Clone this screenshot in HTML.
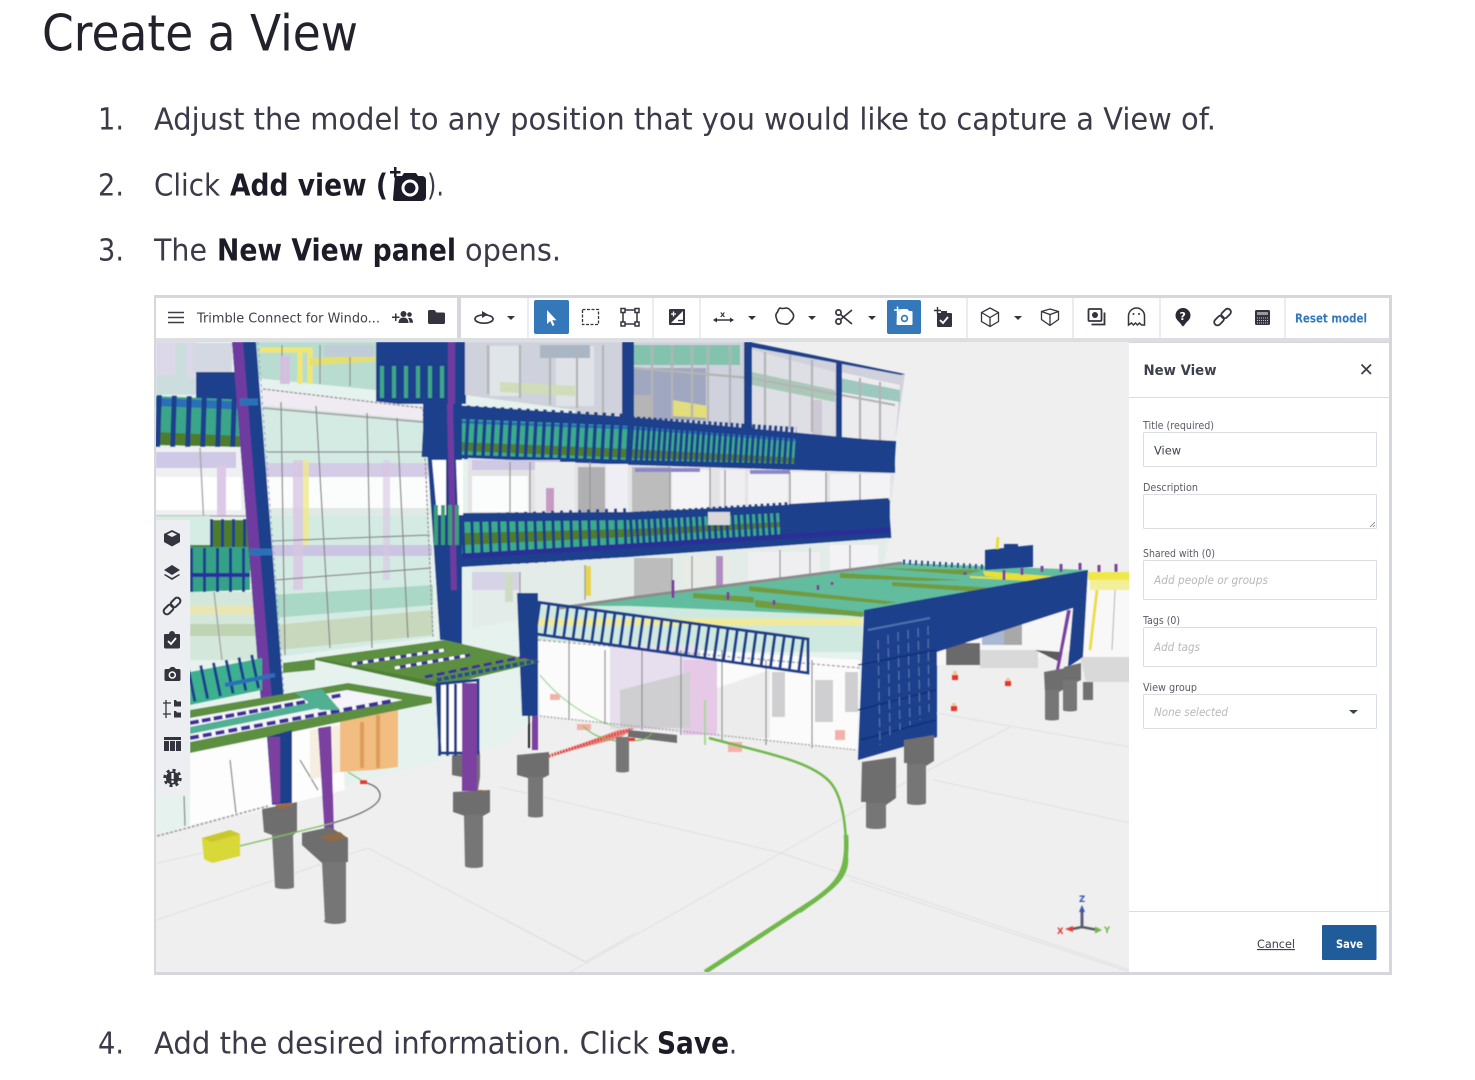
<!DOCTYPE html>
<html lang="en">
<head>
<meta charset="utf-8">
<title>Create a View</title>
<style>
html,body{margin:0;padding:0;background:#fff;width:1475px;height:1080px;overflow:hidden}
svg{display:block}
text{font-family:"DejaVu Sans","Liberation Sans",sans-serif}
.b{fill:#3a3a48;font-size:30.500px}
.s{fill:#1c1c28;font-size:30px;font-weight:bold}
.l{fill:#5a5c66;font-size:10.500px}
.p{fill:#b8b8bc;font-size:11.500px;font-style:italic}
</style>
</head>
<body>
<svg width="1475" height="1080" viewBox="0 0 1475 1080" xmlns="http://www.w3.org/2000/svg">
<defs>
<clipPath id="v"><rect x="156" y="342" width="973" height="630"/></clipPath>
<filter id="bl" x="0" y="0" width="1" height="1"><feGaussianBlur stdDeviation="0.4"/></filter>
</defs>
<rect width="1475" height="1080" fill="#fff"/>

<!-- headings and steps -->
<text x="42" y="50.500" font-size="50" fill="#22222c" textLength="316" lengthAdjust="spacingAndGlyphs">Create a View</text>
<text class="b" x="98" y="129.500" textLength="26" lengthAdjust="spacingAndGlyphs">1.</text>
<text class="b" x="154" y="129.500" textLength="1062" lengthAdjust="spacingAndGlyphs">Adjust the model to any position that you would like to capture a View of.</text>
<text class="b" x="98" y="195.500" textLength="26" lengthAdjust="spacingAndGlyphs">2.</text>
<text class="b" x="154" y="195.500" textLength="66" lengthAdjust="spacingAndGlyphs">Click</text>
<text class="s" x="230" y="195.500" textLength="158" lengthAdjust="spacingAndGlyphs">Add view (</text>
<g fill="#1c1c28">
<path d="M395 176h7l2-3h12l2 3h4a4 4 0 0 1 4 4v17a4 4 0 0 1-4 4h-27a2 2 0 0 1-2-2z"/>
<path d="M394 167h2.500v4h4v2.500h-4v4h-2.500v-4h-4v-2.500h4z"/>
</g>
<circle cx="410" cy="188" r="7" fill="none" stroke="#fff" stroke-width="3"/>
<text class="b" x="427" y="195.500" textLength="17" lengthAdjust="spacingAndGlyphs">).</text>
<text class="b" x="98" y="260.500" textLength="26" lengthAdjust="spacingAndGlyphs">3.</text>
<text class="b" x="154" y="260.500" textLength="53" lengthAdjust="spacingAndGlyphs">The</text>
<text class="s" x="217" y="260.500" textLength="239" lengthAdjust="spacingAndGlyphs">New View panel</text>
<text class="b" x="465" y="260.500" textLength="96" lengthAdjust="spacingAndGlyphs">opens.</text>
<text class="b" x="98" y="1053.500" textLength="26" lengthAdjust="spacingAndGlyphs">4.</text>
<text class="b" x="154" y="1053.500" textLength="495" lengthAdjust="spacingAndGlyphs">Add the desired information. Click</text>
<text class="s" x="657" y="1053.500" textLength="72" lengthAdjust="spacingAndGlyphs">Save</text>
<text class="b" x="729" y="1053.500" textLength="8" lengthAdjust="spacingAndGlyphs">.</text>

<!-- frame -->
<rect x="154" y="295" width="1238" height="680" fill="#d5d7dd"/>
<rect x="156" y="342" width="973" height="630" fill="#efefef"/>

<!-- 3D scene -->
<g clip-path="url(#v)"><g filter="url(#bl)">
<!-- floor lines -->
<g stroke="#e0e0e0" stroke-width="1" fill="none">
<path d="M157 920L368 848L585 962L635 933M157 863L272 838M500 787L781 853L1130 970M781 853L570 972M781 853L910 780M850 880L1130 972M500 917L588 963M934 780L1130 823M936 713L1130 747M1010 727L910 780"/>
</g>
<!-- building base -->
<path d="M156 342H750L905 374L895 442L890 538L878 600L864 612L857 750L540 715L500 745L157 835Z" fill="#e6f2ee"/>
<!-- left upper glass -->
<rect x="156" y="342" width="40" height="52" fill="#dcd8ea"/>
<path d="M175 343h12v35h8v17h-39v-20h19z" fill="#c5dfd8" opacity=".7"/>
<rect x="192" y="343" width="40" height="30" fill="#d4d8e2"/>
<path d="M196 372H240V404H196Z" fill="#1f3f8c"/>
<path d="M156 396L250 400V447L156 445Z" fill="#3aa58a"/>
<path d="M156 398L250 402V410L156 406Z" fill="#2b70b8"/>
<path d="M156 432L240 436V447L156 445Z" fill="#4d7d2a"/>
<path d="M156 421L250 424" stroke="#1f3f8c" stroke-width="52" stroke-dasharray="5 10" fill="none"/>
<path d="M156 447H250V518L156 516Z" fill="#eef0f2"/>
<rect x="156" y="477" width="85" height="33" fill="#fff"/>
<rect x="156" y="452" width="80" height="16" fill="#cfc8e6"/>
<rect x="217" y="465" width="9" height="52" fill="#dcc9e6"/>
<path d="M156 516H247M200 448L205 545" stroke="#a9a9a9" stroke-width="1.500" fill="none"/>
<rect x="156" y="516" width="54" height="90" fill="#d5ece4"/>
<path d="M210 520H250V548H190V545H210Z" fill="#4e7d2c"/>
<path d="M210 533H250" stroke="#1f3f8c" stroke-width="28" stroke-dasharray="3 8" fill="none"/>
<path d="M190 547H250V590L190 592Z" fill="#35a287"/>
<path d="M190 570H250" stroke="#1f3f8c" stroke-width="44" stroke-dasharray="3 10" fill="none"/>
<path d="M190 575H250" stroke="#2b2f9e" stroke-width="4"/>
<path d="M190 592H254L258 660H190Z" fill="#d3e8db"/>
<path d="M190 610H256" stroke="#e9e6b4" stroke-width="9"/>
<path d="M190 630H256" stroke="#c0d4b4" stroke-width="12"/>
<path d="M214 592L222 660M254 590L258 660" stroke="#a9a9a9" stroke-width="1.500"/>
<!-- upper area between column and blue block -->
<path d="M256 342H376V390L256 378Z" fill="#b8ddd0"/>
<path d="M260 350H310V384M300 352V384" stroke="#f0e670" stroke-width="5" fill="none"/>
<path d="M310 362L375 358" stroke="#e4df70" stroke-width="7"/>
<path d="M282 345V384M320 345V384M350 345V386" stroke="#8f8f8f" stroke-width="1.200"/>
<rect x="280" y="356" width="10" height="28" fill="#d3c0de"/>
<rect x="324" y="345" width="50" height="12" fill="#c0ccd6"/>
<rect x="376" y="342" width="90" height="62" fill="#1f3f8c"/>
<path d="M380 382H448" stroke="#3fa688" stroke-width="32" stroke-dasharray="4 8" fill="none"/>
<rect x="448" y="342" width="7" height="62" fill="#6f3aa0"/>
<!-- big panel -->
<path d="M260 388L423 407L433 637L278 657Z" fill="#d4ebe3"/>
<path d="M260 388L423 407V420L262 405Z" fill="#f0eaf2"/>
<path d="M263 408L423 422" stroke="#aaa" stroke-width="2"/>
<path d="M266 463H428V477H266Z" fill="#d4cbe6"/>
<path d="M266 477H429V508H266Z" fill="#fbfcfc"/>
<path d="M268 508H430V516H268Z" fill="#dfe9e6"/>
<path d="M270 545H432V556H270Z" fill="#cbc4e2"/>
<path d="M272 595L433 585V605L272 618Z" fill="#a9d8c6"/>
<path d="M275 625L433 610V635L278 650Z" fill="#c8d8bc"/>
<rect x="293" y="460" width="10" height="130" fill="#d8c5e2" opacity=".8"/>
<rect x="303" y="460" width="6" height="85" fill="#efe88a" opacity=".8"/>
<rect x="383" y="460" width="7" height="120" fill="#d8c5e2" opacity=".6"/>
<g stroke="#8b8b8b" stroke-width="1.300" fill="none">
<path d="M281 402L285 655M316 406L330 648M367 413L372 648M397 418L408 638M267 452H425M272 541L430 535M275 580L431 568"/>
</g>
<path d="M263 389L423 408L433 637" stroke="#9c9c9c" stroke-width="1.500" fill="none" stroke-dasharray="3 1.500"/>
<!-- upper right glass -->
<path d="M465 342H750L905 374L895 442L630 417L575 410L465 395Z" fill="#cfd2dc"/>
<rect x="490" y="346" width="30" height="50" fill="#dfe5e8"/>
<rect x="556" y="346" width="38" height="60" fill="#dfe3e8"/>
<path d="M540 345H590V358H540Z" fill="#a9b6c4"/>
<path d="M500 382L575 386V396L500 392Z" fill="#d1ddb8"/>
<path d="M575 410H612V428H575Z" fill="#d4d4d6"/>
<rect x="634" y="368" width="72" height="52" fill="#9fa8c0"/>
<rect x="634" y="395" width="18" height="24" fill="#b5b5b5"/>
<path d="M632 345H740V365H632Z" fill="#83c3ae"/>
<path d="M672 400L708 406V418L672 416Z" fill="#e3dd7c"/>
<path d="M752 350L835 372V438L752 425Z" fill="#dedfe4"/>
<path d="M752 372L835 390V402L752 385Z" fill="#a8c9b8"/>
<path d="M840 372L900 385L895 442L840 437Z" fill="#ececee"/>
<path d="M840 378L900 390V402L840 392Z" fill="#9cc8c0"/>
<path d="M812 400H822V438H812Z" fill="#cdc7d6"/>
<g stroke="#b4b4b6" stroke-width="2.200" fill="none">
<path d="M488 345V394M520 345V398M550 345V405M577 345V408M603 345V426M652 345V418M672 345V420M692 345V420M708 345V423M730 345V425M765 352V428M790 355V430M812 360V432M860 378V440M880 382V441M634 368L750 378L895 405"/>
</g>
<rect x="622" y="342" width="12" height="280" fill="#1f3f8c"/>
<path d="M750 342L905 374L901 375L750 347Z" fill="#1f3f8c"/>
<rect x="744" y="342" width="8" height="300" fill="#1f3f8c"/>
<rect x="836" y="362" width="6" height="270" fill="#1f3f8c"/>
<!-- band 1 -->
<path d="M423 403L630 417L895 442V473L630 465L423 457Z" fill="#1f3f8c"/>
<path d="M435 418L630 426L895 448V466L630 460L435 454Z" fill="#3aab8c"/>
<path d="M435 441L630 449L895 463V466L630 458L435 450Z" fill="#4d7d2a"/>
<path d="M435 421L630 428L795 440" stroke="#2b70b8" stroke-width="3" fill="none"/>
<path d="M423 430L630 441" stroke="#1f3f8c" stroke-width="54" stroke-dasharray="3.500 5" fill="none"/>
<path d="M630 441L795 452" stroke="#1f3f8c" stroke-width="50" stroke-dasharray="3 2.500" fill="none"/>
<path d="M795 452L895 458" stroke="#1f3f8c" stroke-width="34" fill="none"/>
<path d="M470 411L580 420" stroke="#1f3f8c" stroke-width="8"/>
<!-- mid glass -->
<path d="M468 458L630 465L895 473L890 507L630 512L468 516Z" fill="#e3e3e6"/>
<path d="M472 460H560V470H472Z" fill="#cfc8e4"/>
<rect x="472" y="476" width="56" height="36" fill="#fbfcfc"/>
<rect x="578" y="467" width="27" height="46" fill="#b0b0b2"/>
<rect x="606" y="464" width="22" height="48" fill="#efeef4"/>
<path d="M535 462H575V515H535Z" fill="#ebecee"/>
<rect x="546" y="488" width="8" height="24" fill="#c79ac4"/>
<rect x="632" y="467" width="38" height="45" fill="#bcbcbc"/>
<rect x="672" y="470" width="38" height="40" fill="#f4f4f6"/>
<rect x="720" y="470" width="25" height="45" fill="#efeff2"/>
<rect x="748" y="472" width="40" height="36" fill="#f2f2f4"/>
<rect x="790" y="472" width="36" height="36" fill="#f4f4f6"/>
<rect x="830" y="474" width="60" height="33" fill="#f3f3f5"/>
<path d="M635 470H700M750 472H790" stroke="#8b86c8" stroke-width="4"/>
<g stroke="#969696" stroke-width="1.300">
<path d="M510 462V515M530 462V516M590 462V512M670 467V510M710 467V510M725 470V515M790 472V510M826 472V508M860 474V507"/>
</g>
<!-- band 2 -->
<path d="M462 513L630 512L890 500V538L630 557L462 567Z" fill="#1f3f8c"/>
<path d="M462 522L630 520L780 513V535L630 548L462 558Z" fill="#3aab8c"/>
<path d="M462 533L630 529L780 522V527L630 537L462 545Z" fill="#4d7d2a"/>
<path d="M462 540L630 534" stroke="#1f3f8c" stroke-width="52" stroke-dasharray="3 6" fill="none"/>
<path d="M630 534L790 524" stroke="#1f3f8c" stroke-width="44" stroke-dasharray="3 3" fill="none"/>
<path d="M790 524L890 518" stroke="#1f3f8c" stroke-width="40" fill="none"/>
<path d="M462 556L630 546L890 530" stroke="#2a2f96" stroke-width="5" fill="none"/>
<path d="M708 512H730V525H708Z" fill="#d8d8da"/>
<!-- below band 2 glass -->
<path d="M472 567L630 557L888 538L878 600L630 600L472 628Z" fill="#e3ece8"/>
<path d="M472 572H520V590H472Z" fill="#d6d3e6"/>
<rect x="505" y="572" width="8" height="30" fill="#cfdcc4"/>
<path d="M634 558H672V596H634Z" fill="#bcbcbc"/>
<path d="M682 557H730V592H682Z" fill="#e8ebe6"/>
<rect x="716" y="556" width="7" height="36" fill="#b08dc0"/>
<path d="M748 552H820V588H748Z" fill="#efeff2"/>
<path d="M830 545H878V588H830Z" fill="#f3f3f5"/>
<rect x="585" y="566" width="6" height="30" fill="#e8d54a"/>
<g stroke="#9c9c9c" stroke-width="1.300"><path d="M520 572V596M585 565V600M672 558V595M692 556V592M780 550V590M810 548V586M850 545V585"/></g>
<!-- mint strip behind fence -->
<path d="M538 606H862V652H538Z" fill="#cfe9e0"/>
<path d="M538 622H862" stroke="#f0ea9a" stroke-width="7"/>
<!-- deck -->
<path d="M560 606L630 598L902 563L1088 570L863 616L630 606Z" fill="#62bd9e"/>
<path d="M560 608L630 598L902 563" stroke="#8c8c8c" stroke-width="3" fill="none"/>
<g fill="#6f9c3c">
<path d="M693 593L754 597V603L693 598Z"/>
<path d="M755 600L863 612V617L755 607Z"/>
<path d="M749 586L897 602L885 604L749 591Z"/>
<path d="M840 573L963 580L925 581L840 578Z"/>
<path d="M892 582L997 588L980 592L892 586Z"/>
<path d="M877 568L983 570L965 575Z"/>
</g>
<path d="M983 571L1062 577L1040 582L985 576Z" fill="#e8e033"/>
<path d="M970 577L1030 580" stroke="#e8e033" stroke-width="2"/>
<path d="M903 562L983 567" stroke="#29478f" stroke-width="5" stroke-dasharray="2 4" fill="none"/>
<g stroke="#7c3fa0" stroke-width="3"><path d="M965 575V572M1004 580V570M1022 568V575M1042 566V572M1061 564V572M1080 563V570M1099 565V573M1116 564V572"/><path d="M774 600V605M673 598V580M818 590V585M728 600V592M832 585V582"/></g>
<path d="M985 550L1033 545V567L985 570Z" fill="#1f3f8c"/>
<path d="M1004 549H1018V544H1004Z" fill="#1f3f8c"/>
<rect x="996" y="537" width="3" height="12" fill="#e8e033" transform="rotate(4 997 543)"/>
<!-- ground floor interior -->
<path d="M538 640L860 660L857 750L540 716Z" fill="#fbfbfb"/>
<path d="M610 645H700V730H610Z" fill="#e8dfee"/>
<path d="M683 660H717V735H683Z" fill="#e6c9e6"/>
<path d="M620 690L690 672V728H620Z" fill="#cfcfd2"/>
<path d="M717 688L770 670V738H717Z" fill="#ececec"/>
<path d="M772 672H785V717H772ZM815 680H833V722H815ZM845 672H858V712H845Z" fill="#cfcfd1"/>
<path d="M540 675C560 700 590 720 620 728" stroke="#b5deab" stroke-width="1.500" fill="none"/>
<path d="M705 700V745" stroke="#a5d89a" stroke-width="2" fill="none"/>
<g fill="#f2b2a8"><rect x="550" y="694" width="10" height="6"/><rect x="577" y="724" width="14" height="6"/><rect x="728" y="742" width="14" height="10"/><rect x="835" y="730" width="10" height="10"/></g>
<g stroke="#8e8e8e" stroke-width="1.200"><path d="M569 640V720M605 650V724M642 650V730M681 650V735M722 650V742M766 660V745M812 660V748"/></g>
<path d="M538 640L860 668" stroke="#a9a9a9" stroke-width="1.500" stroke-dasharray="3 2"/>
<path d="M540 716L857 750" stroke="#aaa" stroke-width="1.500" stroke-dasharray="2 1.500"/>
<!-- fence -->
<path d="M536 602L808 639V673L536 634Z" fill="none" stroke="#1f3f8c" stroke-width="3"/>
<path d="M536 618L808 656" stroke="#1f3f8c" stroke-width="34" stroke-dasharray="3 6.500" fill="none"/>
<!-- main left column -->
<path d="M232 342H256L292 803H269Z" fill="#1f3f8c"/>
<path d="M232 342H243L280 800H269Z" fill="#6f3aa0"/>
<path d="M258 342L292 803" stroke="#8ea4d0" stroke-width="1" stroke-dasharray="3 3" fill="none"/>
<path d="M240 402L258 402M250 552L272 552" stroke="#2b70b8" stroke-width="7"/>
<!-- centre column -->
<path d="M424 404H462V640H440Z" fill="#1f3f8c"/>
<path d="M447 404H453L458 640H452Z" fill="#6f3aa0"/>
<path d="M432 460H446V515H437ZM456 460H463V515H458Z" fill="#fff"/>
<path d="M434 525H462" stroke="#3b9e75" stroke-width="40" stroke-dasharray="4 3" fill="none"/>
<path d="M445 590H462V670H445Z" fill="#1f3f8c"/>
<!-- blue column near fence -->
<path d="M517 593H538V716H522Z" fill="#1f3f8c"/>
<rect x="532" y="716" width="6" height="34" fill="#7b3fa0"/>
<rect x="528" y="716" width="2" height="32" fill="#222"/>
<!-- back, under the frame -->
<path d="M937 652L1075 606V650L1000 665H937Z" fill="#f6f6f6"/>
<path d="M982 625H1004V645H982Z" fill="#aab8d4"/>
<path d="M1004 620H1022V645H1004Z" fill="#a8a8a8"/>
<rect x="946" y="643" width="34" height="22" fill="#6a6a6a"/>
<path d="M980 650H1038V668H980Z" fill="#d9d9d9"/>
<path d="M1035 650L1062 652L1060 662Z" fill="#5c5c5c"/>
<path d="M1088 572H1130V657H1082Z" fill="#f8f8f8"/>
<path d="M1088 572H1130V580H1088Z" fill="#f0e84a"/>
<path d="M1090 580H1130V590H1090Z" fill="#f2ee9a"/>
<path d="M1097 590L1090 650" stroke="#ebdf3d" stroke-width="3"/>
<path d="M1115 590L1112 650" stroke="#b0b0b0" stroke-width="1"/>
<path d="M1080 657H1130V682H1086Z" fill="#d9d9d9"/>
<rect x="1083" y="682" width="10" height="18" fill="#717171"/>
<!-- purple post -->
<path d="M1067 610H1071L1059 670H1056Z" fill="#7b3fa0"/>
<!-- blue big frame -->
<path d="M864 610L1088 570L1083 657L1068 667L1073 608L937 652V737L858 760Z" fill="#1f3f8c"/>
<path d="M936 650L858 665M936 690L858 710M936 720L860 740" stroke="#0e2b74" stroke-width="1.200"/>
<path d="M868 630L930 618" stroke="#4f72ae" stroke-width="2" fill="none"/>
<path d="M878 640L880 745M888 635L890 735M898 632L900 730M908 630L910 725M918 628L920 720M928 626L929 712" stroke="#5175ae" stroke-width="1.200" stroke-dasharray="9 4" fill="none"/>
<!-- piers right -->
<g fill="#6e6e6e">
<path d="M904 740L934 735V761L926 766H907V763H904Z"/>
<path d="M862 762L896 757V798L886 805H866V802L861 802Z"/>
<path d="M1044 672L1066 668V688L1059 692H1045Z"/>
<path d="M1064 667L1081 663V680L1077 682H1063Z"/>
</g>
<g fill="#767676">
<rect x="907" y="764" width="19" height="39"/><ellipse cx="916.500" cy="803" rx="9.500" ry="2"/>
<rect x="866" y="803" width="20" height="24"/><ellipse cx="876" cy="827" rx="10" ry="2"/>
<rect x="1045" y="690" width="14" height="29"/><ellipse cx="1052" cy="719" rx="7" ry="1.500"/>
<rect x="1063" y="680" width="14" height="30"/><ellipse cx="1070" cy="710" rx="7" ry="1.500"/>
</g>
<g fill="#e3342c"><rect x="952" y="675" width="6" height="5"/><rect x="1005" y="681" width="6" height="5"/><rect x="951" y="706" width="6" height="5"/></g>
<g fill="#f5c49c"><rect x="953" y="671" width="4" height="4"/><rect x="1006" y="678" width="4" height="3"/><rect x="952" y="703" width="4" height="3"/></g>
<!-- red fan -->
<path d="M546 757L618 730L635 728L620 738Z" fill="#e6574f" opacity=".65"/>
<path d="M546 757L632 729" stroke="#e23d35" stroke-width="3.500" stroke-dasharray="1.500 1.500" fill="none"/>
<!-- center piers -->
<g fill="#6e6e6e">
<path d="M628 730L677 735V743L628 737Z"/>
<path d="M517 755L549 752V775L543 778H528L517 775Z"/>
<path d="M452 755L480 754V777L478 790H462V777L452 775Z"/>
<path d="M453 792L490 790V812L483 816H465L453 812Z"/>
</g>
<g fill="#767676">
<rect x="616" y="737" width="13" height="34"/><ellipse cx="622.500" cy="771" rx="6.500" ry="1.500"/>
<rect x="528" y="777" width="15" height="39"/><ellipse cx="535.500" cy="816" rx="7.500" ry="1.500"/>
<path d="M464 815H483V866H465Z"/><ellipse cx="474" cy="866" rx="9" ry="2"/>
</g>
<path d="M468 790h14l6 1h-24z" fill="#a0683a"/>
<!-- green line -->
<path d="M709 738C760 752 810 760 830 782C846 800 846 840 847 860C847 880 830 890 800 912" stroke="#6fb84a" stroke-width="2.500" fill="none"/>
<path d="M846 835C848 870 840 882 815 900L705 972" stroke="#6fb84a" stroke-width="4.500" fill="none"/>
<path d="M583 726C592 735 600 738 616 741M632 740C640 742 650 738 652 732" stroke="#6fb84a" stroke-width="1" fill="none"/>
<rect x="628" y="738" width="7" height="3" fill="#e5372f"/>
<!-- lower-left wall -->
<path d="M156 835L190 825V748L340 720L345 790L292 803Z" fill="#fdfdfd"/>
<path d="M157 836L268 806" stroke="#a9a9a9" stroke-width="2" stroke-dasharray="3 1.500"/>
<path d="M184 796L185 826M230 760L236 813M300 760L318 790" stroke="#888" stroke-width="1.300"/>
<!-- blue/teal strip behind platform -->
<path d="M190 672L262 658V690L190 705Z" fill="#3db090"/>
<path d="M190 685L262 670" stroke="#1f3f8c" stroke-width="34" stroke-dasharray="3 10" fill="none"/>
<path d="M225 685L275 675" stroke="#2b70b8" stroke-width="4"/>
<!-- green platforms -->
<path d="M283 663L315 659V670L283 673Z" fill="#5c8f3f"/>
<path d="M315 658L445 640L540 662L437 687Z" fill="#5c8f3f"/>
<path d="M352 664L445 650M395 668L470 655" stroke="#fff" stroke-width="3" fill="none" stroke-dasharray="5 6"/>
<path d="M352 664L445 650M395 668L470 655" stroke="#3c2f9a" stroke-width="3" stroke-dasharray="6 5" stroke-dashoffset="6" fill="none"/>
<path d="M425 677L533 655" stroke="#3c2f9a" stroke-width="3" stroke-dasharray="8 4" fill="none"/>
<path d="M437 680L540 660" stroke="#25508a" stroke-width="4" stroke-dasharray="5 2" fill="none"/>
<path d="M315 660L437 687V682L315 658Z" fill="#4f8036"/>
<!-- blue slat column under -->
<path d="M437 684L478 680V753H440Z" fill="#fff"/>
<path d="M437 684L478 680V753H440Z" fill="none" stroke="#1f3f8c" stroke-width="3"/>
<path d="M438 720H478" stroke="#1f3f8c" stroke-width="72" stroke-dasharray="3 5" fill="none"/>
<rect x="462" y="683" width="15" height="108" fill="#7b3fa0"/>
<!-- orange curtain -->
<path d="M340 722L398 708V767L374 770L340 772Z" fill="#f2bd80"/>
<path d="M362 722V768M378 715V768" stroke="#dd9c5a" stroke-width="4"/>
<path d="M310 730L340 725V772L310 780Z" fill="#f4e5d0" opacity=".6"/>
<!-- lower platform -->
<path d="M190 710L348 683L432 697V703L190 753Z" fill="#5c8f3f"/>
<path d="M190 718L347 690L403 700L190 742Z" fill="#f4f4fa"/>
<path d="M190 723L342 695" stroke="#3c2f9a" stroke-width="4" stroke-dasharray="9 3" fill="none"/>
<path d="M190 738L392 701" stroke="#3c2f9a" stroke-width="4" stroke-dasharray="9 4" fill="none"/>
<path d="M190 727L318 701L324 707L190 734Z" fill="#4fb092"/>
<path d="M295 693L322 689L340 710L320 710Z" fill="#4fb092"/>
<!-- column over wall -->
<path d="M267 737L292 730L292 803L272 805Z" fill="#1f3f8c"/>
<path d="M268 737H280V803H272Z" fill="#7b3fa0"/>
<path d="M318 728L331 726L334 837H325Z" fill="#7b3fa0"/>
<!-- left piers -->
<g fill="#6e6e6e">
<path d="M262 809L297 802V832L293 835H272L264 832Z"/>
<path d="M302 833L330 827L348 838V862L333 863H322L302 845Z"/>
</g>
<g fill="#767676">
<path d="M272 834H293L294 887H275Z"/><ellipse cx="284.500" cy="887" rx="9.500" ry="2"/>
<path d="M322 862H346V921H325Z"/><ellipse cx="335" cy="921" rx="11" ry="3"/>
</g>
<path d="M320 836L340 832L347 838L330 842Z" fill="#8e6a46"/>
<path d="M275 805L290 803L293 806L278 809Z" fill="#a0683a"/>
<!-- yellow box -->
<path d="M202 838L230 830L240 834V856L212 863L204 859Z" fill="#d8d838"/>
<path d="M202 838L230 830L240 834L212 842Z" fill="#c8c82e"/>
<!-- thin cable -->
<path d="M240 846L333 823" stroke="#7cc05e" stroke-width="1.300" fill="none"/>
<path d="M333 823C360 815 382 805 380 794C378 786 370 784 364 782" stroke="#6a6a6a" stroke-width="1.300" fill="none"/>
<path d="M364 782L348 772" stroke="#7cc05e" stroke-width="1.300"/>
<rect x="360" y="780" width="7" height="4" fill="#e5372f"/>
<!-- axes -->
<path d="M1082 928V911" stroke="#5b5f7a" stroke-width="3"/>
<path d="M1082 905l-3 7h6z" fill="#3c55b0"/>
<path d="M1072 929L1082 927L1098 930" stroke="#5a5a62" stroke-width="2.500" fill="none"/>
<path d="M1065 929l8-3v6z" fill="#e23d35"/>
<path d="M1102 930l-7-3.500v7z" fill="#6fb84a"/>
<text x="1079" y="902" font-size="8.500" font-weight="bold" fill="#3c55b0">Z</text>
<text x="1057" y="934" font-size="8.500" font-weight="bold" fill="#e23d35">X</text>
<text x="1104" y="933" font-size="8.500" font-weight="bold" fill="#6fb84a">Y</text>
</g></g>

<!-- left vertical tools -->
<rect x="156" y="520" width="34" height="275" fill="#eceef2"/>
<g fill="#34343f">
<path d="M172 530l8 4v8l-8 4.500-8-4.500v-8zM172 532l-5 2.500 5 2.500 5-2.500z"/>
<path d="M172 565l8 5-8 5-8-5z"/><path d="M165 574l7 4 7-4 1 1-8 5-8-5z"/>
<path d="M164 635a1 1 0 0 1 1-1h4a3 3 0 0 1 6 0h4a1 1 0 0 1 1 1v12a1.500 1.500 0 0 1-1.500 1.500h-13a1.500 1.500 0 0 1-1.500-1.500z"/>
<path d="M169 669l2-2h3l2 2h3a1.500 1.500 0 0 1 1.500 1.500v9a1.500 1.500 0 0 1-1.500 1.500h-13a1.500 1.500 0 0 1-1.500-1.500v-9a1.500 1.500 0 0 1 1.500-1.500z"/>
<path d="M174 700h2l1 1.500h4v5h-7zM174 711h2l1 1.500h4v5h-7z"/>
<path d="M164 737h17v3h-17zM164 741h5v10h-5zM170 741h5v10h-5zM176 741h5v10h-5z"/>
<circle cx="172.500" cy="778" r="6.500"/>
</g>
<circle cx="172.500" cy="778" r="7.800" fill="none" stroke="#34343f" stroke-width="2.800" stroke-dasharray="3 3.100"/>
<g fill="none" stroke="#34343f" stroke-width="2">
<rect x="163" y="606.300" width="11" height="6.500" rx="3.200" transform="rotate(-45 168.500 609.500)"/>
<rect x="170" y="599.300" width="11" height="6.500" rx="3.200" transform="rotate(-45 175.500 602.500)"/>
</g>
<path d="M168 641l3 3 5-6" fill="none" stroke="#fff" stroke-width="1.800"/>
<circle cx="172.300" cy="675" r="3" fill="none" stroke="#fff" stroke-width="1.500"/>
<path d="M166 700v18M163 703h8M163 714h8" stroke="#34343f" stroke-width="1.300" fill="none"/>
<rect x="171.400" y="773" width="2.300" height="6" fill="#fff"/><rect x="171.400" y="780.500" width="2.300" height="2.300" fill="#fff"/>

<!-- toolbar -->
<rect x="156" y="298" width="301" height="40" fill="#fff"/>
<rect x="461" y="298" width="928" height="40" fill="#fff"/>
<rect x="156" y="338" width="1233" height="4" fill="#dcdee2"/>
<g stroke="#e4e6ea" stroke-width="1.500"><path d="M528 298V338M653 298V338M700 298V338M967 298V338M1073 298V338M1160 298V338M1285 298V338"/></g>
<path d="M168 312.500h16M168 317.500h16M168 322.500h16" stroke="#3e3e4a" stroke-width="1.500"/>
<text x="197" y="322.500" font-size="13" fill="#3e404c" textLength="183" lengthAdjust="spacingAndGlyphs">Trimble Connect for Windo...</text>
<g fill="#34343f">
<path d="M392 316.500h3v-3h1.500v3h3v1.500h-3v3h-1.500v-3h-3z"/>
<circle cx="403.500" cy="314" r="3"/><circle cx="409.500" cy="314.500" r="2.300"/>
<path d="M398.500 323c0-4 2.500-5.500 5-5.500s5 1.500 5 5.500z"/><path d="M409 317.800c2.500 0 4 1.500 4 5h-3.500c0-2-.3-3.500-1.500-4.500z"/>
<path d="M428 311.500a1.500 1.500 0 0 1 1.500-1.500h5l2 2.500h7a1.500 1.500 0 0 1 1.500 1.500v8.500a1.500 1.500 0 0 1-1.500 1.500h-14a1.500 1.500 0 0 1-1.500-1.500z"/>
</g>
<ellipse cx="484" cy="319" rx="9" ry="4.200" fill="none" stroke="#34343f" stroke-width="1.700"/>
<path d="M482 311l6 3.500-6 3.500z" fill="#34343f"/>
<path d="M507 316h8l-4 4z M748 316h8l-4 4z M808 316h8l-4 4z M868 316h8l-4 4z M1014 316h8l-4 4z" fill="#34343f"/>
<rect x="534" y="300" width="35" height="34" rx="2" fill="#3478ba"/>
<path d="M547 310v14l3.300-3 2.200 5 2-1-2.200-4.700h4.200z" fill="#fff"/>
<rect x="582.500" y="309.500" width="16" height="15" fill="none" stroke="#34343f" stroke-width="1.300" stroke-dasharray="3 1.500"/>
<g fill="none" stroke="#34343f" stroke-width="1.500">
<rect x="623" y="310" width="14" height="14"/>
<rect x="621" y="308.500" width="4" height="4" fill="#fff"/><rect x="635" y="308.500" width="4" height="4" fill="#fff"/><rect x="621" y="322" width="4" height="4" fill="#fff"/><rect x="635" y="322" width="4" height="4" fill="#fff"/>
</g>
<rect x="669" y="309" width="16" height="16" rx="1" fill="#34343f"/>
<path d="M670 324L684 310V324Z" fill="#fff"/><rect x="670.500" y="310.500" width="13" height="13" fill="none" stroke="#34343f" stroke-width="1"/>
<path d="M671 314h5M673.500 311.500v5" stroke="#fff" stroke-width="1.300"/><path d="M678 320.500h5" stroke="#34343f" stroke-width="1.300"/>
<path d="M714 320h19" stroke="#34343f" stroke-width="1.400"/><path d="M713 320l4-2.500v5zM734 320l-4-2.500v5z" fill="#34343f"/>
<text x="720" y="317" font-size="8" font-weight="bold" fill="#34343f">x</text>
<path d="M780 308c2 1 4 .5 6 0 3 0 4 2 5 3 2 2 3 4 2.500 6-.5 3-2.500 3.500-3.500 5-1 2-4 2.500-6 2s-4 0-6-2c-1.500-1.500-1-3-2-5-.5-2 .5-4 1.500-5 1-2 1-3.500 2.500-4z" fill="none" stroke="#34343f" stroke-width="1.600"/>
<g fill="none" stroke="#34343f" stroke-width="1.700"><circle cx="838.500" cy="321.500" r="2.600"/><circle cx="838.500" cy="312.500" r="2.600"/><path d="M840.500 314.500L852 324M840.500 319.500L852 310"/></g>
<rect x="887" y="300" width="34" height="34" rx="2" fill="#3478ba"/>
<path d="M897 311h3l1.500-2h6l1.500 2h2.500a1 1 0 0 1 1 1v12a1 1 0 0 1-1 1h-14a1 1 0 0 1-1-1z" fill="#fff"/>
<circle cx="904.500" cy="318.500" r="3.700" fill="#3478ba"/><circle cx="904.500" cy="318.500" r="2" fill="#fff"/>
<path d="M894 310h7M897.500 306.500v7" stroke="#fff" stroke-width="1.400"/>
<path d="M938 313h3v-2h6v2h4a1 1 0 0 1 1 1v12a1 1 0 0 1-1 1h-13a1 1 0 0 1-1-1v-12z" fill="#34343f"/>
<path d="M934 310.500h7M937.500 307v7" stroke="#34343f" stroke-width="1.400"/>
<path d="M940 320l3 3 5-6" stroke="#fff" stroke-width="1.800" fill="none"/>
<g fill="none" stroke="#34343f" stroke-width="1.300">
<path d="M990 308l8.500 4.500v9l-8.500 5-8.500-5v-9zM981.500 312.500l8.500 5 8.500-5M990 317.500v9"/>
<path d="M1050 309l8.500 2.500v8l-8.500 6-8.500-6v-8zM1041.500 311.500l8.500 3 8.500-3M1050 314.500v11"/>
<rect x="1088.500" y="309" width="13" height="12" rx="1" stroke-width="1.800"/>
<path d="M1091.500 324.500h13v-12" stroke-width="1.800"/>
<path d="M1128.500 325v-9a8 8 0 0 1 16 0v9h-3l-2-2-2 2-2-2-2 2-2-2z" stroke-width="1.500"/>
</g>
<circle cx="1095" cy="315" r="3" fill="#34343f"/>
<circle cx="1133.500" cy="314" r="1" fill="#34343f"/><circle cx="1139" cy="314" r="1" fill="#34343f"/>
<path d="M1183 308a7.500 7.500 0 0 1 7.500 7.500c0 4.500-4 6-6 9.500l-1.500 1.500-1.500-1.500c-2-3.500-6-5-6-9.500a7.500 7.500 0 0 1 7.500-7.500z" fill="#2a2a35"/>
<text x="1179.500" y="320" font-size="11" font-weight="bold" fill="#fff">?</text>
<g fill="none" stroke="#34343f" stroke-width="1.800">
<rect x="1213.500" y="317.300" width="11" height="6.500" rx="3.200" transform="rotate(-45 1219 320.500)"/>
<rect x="1220.500" y="310.300" width="11" height="6.500" rx="3.200" transform="rotate(-45 1226 313.500)"/>
</g>
<rect x="1255" y="310" width="15" height="15" rx="1.500" fill="#34343f"/>
<rect x="1257" y="312" width="11" height="3" fill="#9a9a9a"/>
<path d="M1257 318h11M1257 320.500h11M1257 323h11" stroke="#c8c8c8" stroke-width="1" stroke-dasharray="1 1"/>
<text x="1295" y="322.500" font-size="12" font-weight="bold" fill="#3278ba" textLength="72" lengthAdjust="spacingAndGlyphs">Reset model</text>

<!-- right panel -->
<rect x="1129" y="343" width="260" height="629" fill="#fff"/>
<path d="M1129 397.500H1389M1129 911.500H1389" stroke="#dcdde2" stroke-width="1"/>
<text x="1143.500" y="375" font-size="14" font-weight="bold" fill="#3d3f4c" textLength="73" lengthAdjust="spacingAndGlyphs">New View</text>
<path d="M1361.500 364.500l9.500 9.500M1371 364.500l-9.500 9.500" stroke="#3d3f4c" stroke-width="1.800"/>
<text class="l" x="1143" y="429" textLength="71" lengthAdjust="spacingAndGlyphs">Title (required)</text>
<rect x="1143.500" y="432.500" width="233" height="34" rx="1" fill="#fff" stroke="#dcdde2"/>
<text x="1154" y="454.500" font-size="11.500" fill="#3d3f4c" textLength="27" lengthAdjust="spacingAndGlyphs">View</text>
<text class="l" x="1143" y="491" textLength="55" lengthAdjust="spacingAndGlyphs">Description</text>
<rect x="1143.500" y="494.500" width="233" height="34" rx="1" fill="#fff" stroke="#dcdde2"/>
<path d="M1370 527l5-5M1373 527l2-2" stroke="#777" stroke-width=".8"/>
<text class="l" x="1143" y="557" textLength="72" lengthAdjust="spacingAndGlyphs">Shared with (0)</text>
<rect x="1143.500" y="560.500" width="233" height="39" rx="1" fill="#fff" stroke="#dcdde2"/>
<text class="p" x="1154" y="584" textLength="114" lengthAdjust="spacingAndGlyphs">Add people or groups</text>
<text class="l" x="1143" y="624" textLength="37" lengthAdjust="spacingAndGlyphs">Tags (0)</text>
<rect x="1143.500" y="627.500" width="233" height="39" rx="1" fill="#fff" stroke="#dcdde2"/>
<text class="p" x="1154" y="651" textLength="46" lengthAdjust="spacingAndGlyphs">Add tags</text>
<text class="l" x="1143" y="691" textLength="54" lengthAdjust="spacingAndGlyphs">View group</text>
<rect x="1143.500" y="694.500" width="233" height="34" rx="1" fill="#fff" stroke="#dcdde2"/>
<text class="p" x="1154" y="716" textLength="74" lengthAdjust="spacingAndGlyphs">None selected</text>
<path d="M1349 710h9l-4.500 4z" fill="#3d3f4c"/>
<text x="1257" y="948" font-size="11.500" fill="#3d3f4c" text-decoration="underline" textLength="38" lengthAdjust="spacingAndGlyphs">Cancel</text>
<rect x="1322" y="925" width="54.500" height="35" rx="1" fill="#1f5c99"/>
<text x="1336" y="948" font-size="11.500" font-weight="bold" fill="#fff" textLength="27" lengthAdjust="spacingAndGlyphs">Save</text>
</svg>
</body>
</html>
